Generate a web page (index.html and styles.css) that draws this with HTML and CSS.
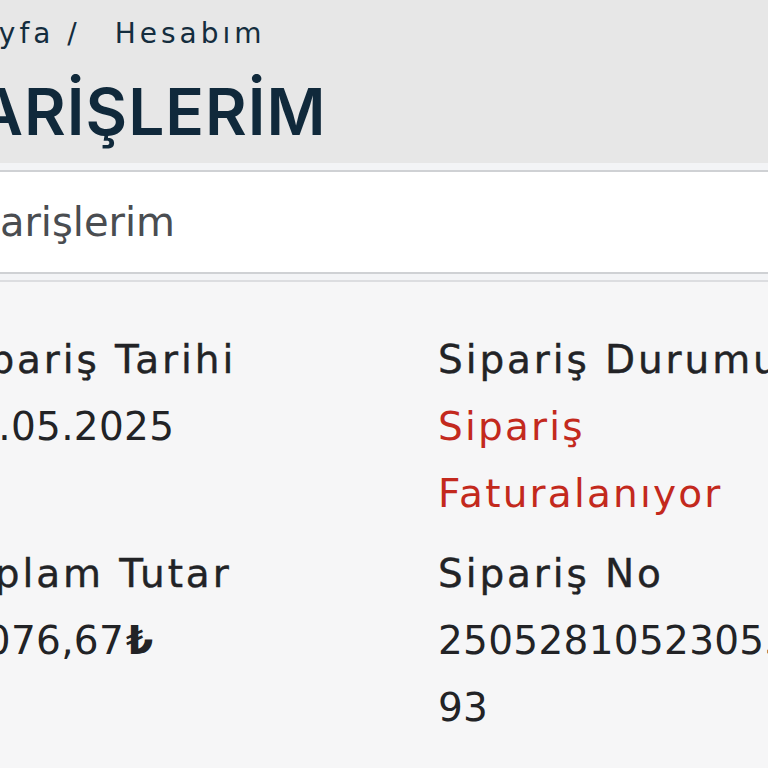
FILE: index.html
```html
<!DOCTYPE html>
<html lang="tr">
<head>
<meta charset="utf-8">
<title>Siparişlerim</title>
<link rel="stylesheet" href="styles.css">
</head>
<body>
<header class="page-head">
  <nav class="crumbs"><span class="crumb">Anasayfa /</span><span class="crumb current">Hesabım</span></nav>
  <h1 class="title">SİPARİŞLERİM</h1>
</header>
<div class="strip"></div>
<div class="tab-bar">
  <div class="tab">Siparişlerim</div>
</div>
<div class="strip strip-low"></div>
<main class="orders">
  <section class="order-grid">
    <div class="field">
      <div class="label">Sipariş Tarihi</div>
      <div class="value">28.05.2025</div>
    </div>
    <div class="field">
      <div class="label">Sipariş Durumu</div>
      <div class="value status">Sipariş Faturalanıyor</div>
    </div>
    <div class="field">
      <div class="label">Toplam Tutar</div>
      <div class="value">1.076,67<span class="lira">₺</span></div>
    </div>
    <div class="field">
      <div class="label">Sipariş No</div>
      <div class="value number">2505281052305593</div>
    </div>
  </section>
</main>
</body>
</html>
```
FILE: styles.css
```css
html, body {
  margin: 0;
  padding: 0;
}
body {
  width: 768px;
  height: 768px;
  overflow: hidden;
  background: #f6f6f7;
  font-family: "DejaVu Sans", "Noto Sans", sans-serif;
}
.page-head {
  background: #e7e7e7;
  height: 163px;
  box-sizing: border-box;
  padding-top: 14px;
}
.crumbs {
  display: flex;
  gap: 34px;
  font-size: 28px;
  line-height: 40px;
  letter-spacing: 4px;
  color: #142d3e;
  margin-left: -107px;
  white-space: nowrap;
}
.title {
  margin: 23px 0 0 -122px;
  font-family: Inter, "DejaVu Sans", sans-serif;
  font-size: 64px;
  line-height: 70px;
  font-weight: 600;
  letter-spacing: 1px;
  color: #10293b;
  white-space: nowrap;
}
.strip {
  height: 7px;
  background: #f3f4f6;
  border-bottom: 2px solid #cfd1d4;
}
.strip-low {
  height: 6px;
  border-bottom: 2px solid #dcdde0;
}
.tab-bar {
  background: #ffffff;
  height: 100px;
  border-bottom: 2px solid #cfd1d4;
  display: flex;
  align-items: center;
}
.tab {
  margin-left: -62px;
  font-size: 40px;
  color: #4a4d51;
  white-space: nowrap;
}
.orders {
  padding-top: 44px;
}
.order-grid {
  display: grid;
  grid-template-columns: 490px 380px;
  row-gap: 13px;
  margin-left: -52px;
}
.field {
  font-size: 39px;
  line-height: 67px;
  color: #222326;
}
.label {
  white-space: nowrap;
  letter-spacing: 2.9px;
  -webkit-text-stroke: 0.4px #222326;
}
.value {
  letter-spacing: 0.3px;
}
.status {
  color: #c3291d;
  letter-spacing: 2.2px;
  width: 320px;
}
.number {
  word-break: break-all;
  width: 370px;
}
.lira {
  font-weight: 700;
  margin-left: 2px;
}
```
